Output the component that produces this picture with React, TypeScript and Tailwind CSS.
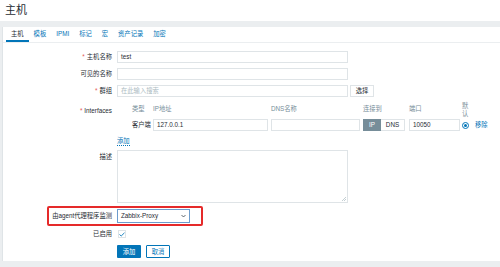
import React from "react";

const tabs = ["主机", "模板", "IPMI", "标记", "宏", "资产记录", "加密"];

function Label({ text, req }: { text: string; req?: boolean }) {
  return (
    <div className="w-[109px] shrink-0 pr-0 text-right text-[#1f2c33]">
      {req && <span className="mr-[2px] text-[#e45959]">*</span>}
      {text}
    </div>
  );
}

function Field({ w, value, ph, h = "h-[12px]" }: { w: string; value?: string; ph?: string; h?: string }) {
  return (
    <div className={`${w} ${h} flex items-center border border-[#dfe4e7] bg-white px-[3px]`}>
      {value ? <span className="text-[#1f2c33]">{value}</span> : <span className="text-[#acbbc2]">{ph}</span>}
    </div>
  );
}

export default function App() {
  return (
    <div
      className="h-[267px] w-[500px] overflow-hidden bg-[#ebeef0] text-[6.3px] leading-none"
      style={{ fontFamily: '"Liberation Sans", "Noto Sans CJK SC", sans-serif' }}
    >
      {/* header */}
      <div className="flex h-[21px] items-start bg-white pl-[5px] pt-[5px]">
        <h1 className="text-[11px] leading-none text-[#1f2c33]">主机</h1>
      </div>

      <div className="pl-[2px] pt-[6px]">
        <div className="h-[234px] border-l border-[#dfe4e7] bg-white">
          {/* tabs */}
          <div className="flex h-[16px] items-stretch border-b border-[#ebeef0] pl-[3px]">
            {tabs.map((t, i) => (
              <div
                key={t}
                className={`flex items-center px-[5px] pt-[1px] ${
                  i === 0 ? "border-b-2 border-[#0275b8] text-[#1f2c33]" : "border-b-2 border-transparent text-[#0275b8]"
                }`}
              >
                {t}
              </div>
            ))}
          </div>

          <div className="flex flex-col pt-[8px]">
            <div className="flex items-center gap-[5px]">
              <Label text="主机名称" req />
              <Field w="w-[231px]" value="test" />
            </div>
            <div className="mt-[5px] flex items-center gap-[5px]">
              <Label text="可见的名称" />
              <Field w="w-[231px]" />
            </div>
            <div className="mt-[5px] flex items-center gap-[5px]">
              <Label text="群组" req />
              <Field w="w-[231px]" ph="在此输入搜索" />
              <div className="-ml-[3px] flex h-[12px] w-[24px] items-center justify-center border border-[#dfe4e7] text-[#1f2c33]">
                选择
              </div>
            </div>

            {/* interfaces */}
            <div className="mt-[4px] flex gap-[5px]">
              <div className="pt-[7px]">
                <Label text="Interfaces" req />
              </div>
              <div className="flex flex-col">
                <div className="flex h-[16px] items-center text-[#768d99]">
                  <div className="w-[36px] pl-[15px]">类型</div>
                  <div className="w-[118px]">IP地址</div>
                  <div className="w-[92px]">DNS名称</div>
                  <div className="w-[46px]">连接到</div>
                  <div className="w-[53px]">端口</div>
                  <div className="flex w-[8px] flex-col gap-[1px] leading-[7px]">
                    <span>默</span>
                    <span>认</span>
                  </div>
                </div>
                <div className="mt-[2px] flex items-center">
                  <div className="w-[36px] pl-[15px] text-[#1f2c33]">客户端</div>
                  <Field w="w-[115px]" value="127.0.0.1" />
                  <div className="w-[3px]" />
                  <Field w="w-[89px]" />
                  <div className="w-[3px]" />
                  <div className="flex h-[12px] w-[42px]">
                    <div className="flex w-[18px] items-center justify-center bg-[#768d99] text-white">IP</div>
                    <div className="flex flex-1 items-center justify-center border border-l-0 border-[#dfe4e7] text-[#1f2c33]">
                      DNS
                    </div>
                  </div>
                  <div className="w-[4px]" />
                  <Field w="w-[51px]" value="10050" />
                  <div className="ml-[2px] flex h-[7px] w-[7px] items-center justify-center rounded-full border border-[#0275b8]">
                    <div className="h-[3px] w-[3px] rounded-full bg-[#0275b8]" />
                  </div>
                  <span className="ml-[6px] text-[#0275b8]">移除</span>
                </div>
              </div>
            </div>

            <div className="mt-[7px] flex gap-[5px]">
              <div className="w-[109px]" />
              <span className="border-b border-dotted border-[#0275b8] pb-[1px] text-[#0275b8]">添加</span>
            </div>

            <div className="mt-[4px] flex gap-[5px]">
              <div className="pt-[4px]">
                <Label text="描述" />
              </div>
              <div className="relative h-[53px] w-[231px] border border-[#dfe4e7]">
                <svg className="absolute bottom-[1px] right-[1px]" width="5" height="5" viewBox="0 0 5 5">
                  <path d="M1 5L5 1M3 5L5 3" stroke="#acbbc2" strokeWidth="0.7" />
                </svg>
              </div>
            </div>

            <div className="relative mt-[6px] flex items-center gap-[5px]">
              <div className="absolute left-[44px] top-[-3px] h-[20px] w-[156px] rounded-[2px] border-2 border-[#e52a2a]" />
              <Label text="由agent代理程序监测" />
              <div className="flex h-[14px] w-[73px] items-center justify-between border border-[#6c9ccd] px-[3px] text-[#1f2c33]">
                <span>Zabbix-Proxy</span>
                <svg width="5" height="4" viewBox="0 0 5 4">
                  <path d="M0.5 1L2.5 3L4.5 1" stroke="#1f2c33" strokeWidth="0.7" fill="none" />
                </svg>
              </div>
            </div>

            <div className="mt-[7px] flex items-center gap-[5px]">
              <Label text="已启用" />
              <div className="ml-[1px] flex h-[8px] w-[8px] items-center justify-center border border-[#dfe4e7]">
                <svg width="6" height="5" viewBox="0 0 6 5">
                  <path d="M0.5 2.5L2.2 4L5.5 0.8" stroke="#0275b8" strokeWidth="0.9" fill="none" />
                </svg>
              </div>
            </div>

            <div className="mt-[7px] flex items-center gap-[5px]">
              <div className="w-[109px]" />
              <div className="flex h-[13px] w-[24px] items-center justify-center rounded-[1px] bg-[#0275b8] text-white">添加</div>
              <div className="flex h-[13px] w-[24px] items-center justify-center rounded-[1px] border border-[#0275b8] text-[#0275b8]">
                取消
              </div>
            </div>
          </div>
        </div>
      </div>
    </div>
  );
}
